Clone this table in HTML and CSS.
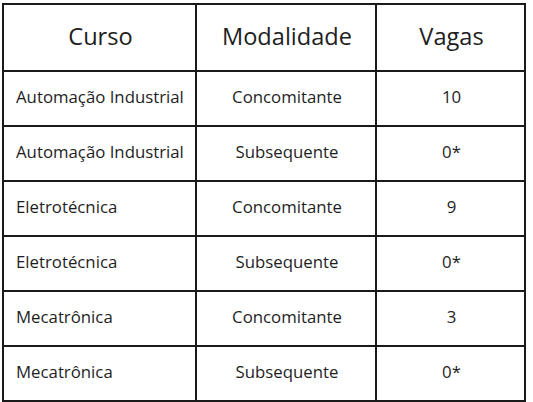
FILE: index.html
```html
<!DOCTYPE html>
<html lang="pt">
<head>
<meta charset="utf-8">
<link rel="stylesheet" href="styles.css">
</head>
<body>
<table class="vagas">
  <colgroup>
    <col class="c1"><col class="c2"><col class="c3">
  </colgroup>
  <thead>
    <tr><th>Curso</th><th>Modalidade</th><th>Vagas</th></tr>
  </thead>
  <tbody>
    <tr><td class="curso">Automação Industrial</td><td>Concomitante</td><td>10</td></tr>
    <tr><td class="curso">Automação Industrial</td><td>Subsequente</td><td>0*</td></tr>
    <tr><td class="curso">Eletrotécnica</td><td>Concomitante</td><td>9</td></tr>
    <tr><td class="curso">Eletrotécnica</td><td>Subsequente</td><td>0*</td></tr>
    <tr><td class="curso">Mecatrônica</td><td>Concomitante</td><td>3</td></tr>
    <tr><td class="curso">Mecatrônica</td><td>Subsequente</td><td>0*</td></tr>
  </tbody>
</table>
</body>
</html>
```
FILE: styles.css
```css
html, body {
  margin: 0;
  padding: 0;
  background: #fff;
}
body {
  padding: 3px 0 0 2px;
  font-family: "Open Sans", sans-serif;
  color: #1e1e1e;
}
.vagas {
  border-collapse: collapse;
  table-layout: fixed;
  width: 522px;
  border: 2px solid #1a1a1a;
}
.c1 { width: 193px; }
.c2 { width: 180px; }
.c3 { width: 149px; }
.vagas th, .vagas td {
  border: 2px solid #1a1a1a;
  text-align: center;
  padding: 0 10px 0 12px;
  box-sizing: border-box;
  white-space: nowrap;
}
.vagas th {
  font-weight: 400;
  font-size: 23.6px;
  line-height: 1.2;
  height: 67px;
  padding-bottom: 3px;
}
.vagas td {
  font-size: 16.8px;
  line-height: 1.2;
  height: 55px;
  padding-bottom: 2px;
}
.vagas td.curso {
  text-align: left;
}
```
